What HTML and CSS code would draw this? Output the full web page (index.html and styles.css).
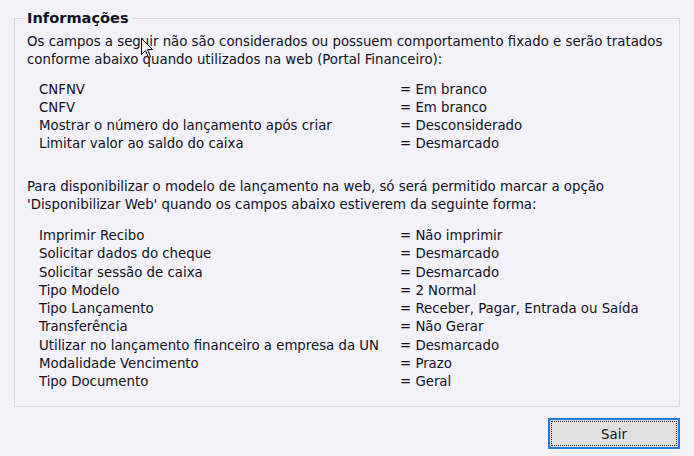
FILE: index.html
```html
<!DOCTYPE html>
<html lang="pt-BR">
<head>
<meta charset="utf-8">
<link rel="stylesheet" href="styles.css">
</head>
<body>
<div class="window">
  <fieldset class="group">
    <legend class="title">Informações</legend>
    <p class="para">Os campos a seguir não são considerados ou possuem comportamento fixado e serão tratados conforme abaixo quando utilizados na web (Portal Financeiro):</p>
    <div class="list list1">
      <span>CNFNV</span><span>= Em branco</span>
      <span>CNFV</span><span>= Em branco</span>
      <span>Mostrar o número do lançamento após criar</span><span>= Desconsiderado</span>
      <span>Limitar valor ao saldo do caixa</span><span>= Desmarcado</span>
    </div>
    <p class="para para2">Para disponibilizar o modelo de lançamento na web, só será permitido marcar a opção 'Disponibilizar Web' quando os campos abaixo estiverem da seguinte forma:</p>
    <div class="list list2">
      <span>Imprimir Recibo</span><span>= Não imprimir</span>
      <span>Solicitar dados do cheque</span><span>= Desmarcado</span>
      <span>Solicitar sessão de caixa</span><span>= Desmarcado</span>
      <span>Tipo Modelo</span><span>= 2 Normal</span>
      <span>Tipo Lançamento</span><span>= Receber, Pagar, Entrada ou Saída</span>
      <span>Transferência</span><span>= Não Gerar</span>
      <span>Utilizar no lançamento financeiro a empresa da UN</span><span>= Desmarcado</span>
      <span>Modalidade Vencimento</span><span>= Prazo</span>
      <span>Tipo Documento</span><span>= Geral</span>
    </div>
  </fieldset>
  <div class="actions">
    <button class="btn" type="button"><span class="focus">Sair</span></button>
  </div>
  <svg class="cursor" width="12" height="20" viewBox="0 0 12 20"><path d="M0.5 0.5 L0.5 16.5 L4.5 12.5 L7.5 19.5 L9.5 18.5 L6.5 11.5 L11.5 11.5 Z" fill="#fff" stroke="#000" stroke-width="1"/></svg>
</div>
</body>
</html>
```
FILE: styles.css
```css
html, body {
  margin: 0;
  padding: 0;
  background: #f2f2f8;
}
.window {
  position: relative;
  width: 694px;
  height: 456px;
  font-family: "DejaVu Sans Condensed", "DejaVu Sans", sans-serif;
  font-size: 14.8px;
  color: #111122;
  padding: 10px 14px 0 14px;
  box-sizing: border-box;
}
.group {
  margin: 0;
  border: 1px solid #d9d9de;
  padding: 6px 10px 0 12px;
  height: 397px;
  box-sizing: border-box;
  min-width: 0;
}
.title {
  font-family: "DejaVu Sans", sans-serif;
  font-weight: bold;
  font-size: 14.6px;
  padding: 0 3px;
  margin-left: -3px;
  line-height: 16px;
}
.para {
  margin: 0;
  line-height: 18.25px;
}
.list {
  display: grid;
  grid-template-columns: 361px auto;
  padding-left: 12px;
  line-height: 18.25px;
}
.list1 { margin-top: 11px; }
.para2 { margin-top: 24px; }
.list2 { margin-top: 13px; }
.actions {
  display: flex;
  justify-content: flex-end;
  padding-top: 11px;
}
.btn {
  width: 132px;
  height: 31px;
  border: 2px solid #1e7bdc;
  background: #e1e1e1;
  padding: 1px;
  font: inherit;
  color: #111;
  box-sizing: border-box;
}
.focus {
  display: block;
  height: 100%;
  box-sizing: border-box;
  border: 1px dotted #222;
  line-height: 23px;
  text-align: center;
}
.cursor {
  position: absolute;
  left: 141px;
  top: 38px;
}
```
